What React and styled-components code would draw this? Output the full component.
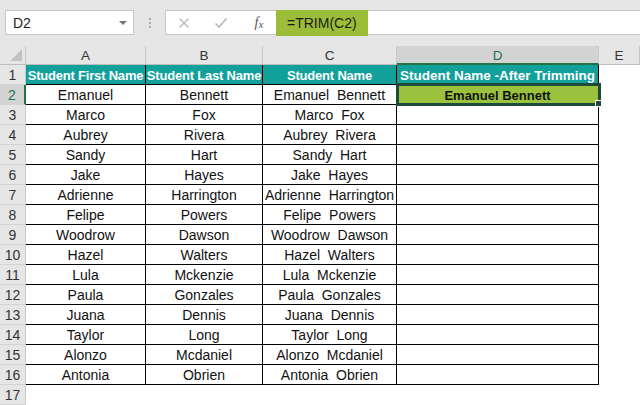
import React from "react";
import styled, { createGlobalStyle, css } from "styled-components";

const GlobalStyle = createGlobalStyle`
  html, body { margin: 0; padding: 0; background: #ffffff; }
  body { font-family: "Liberation Sans", Arial, sans-serif; }
  * { box-sizing: border-box; }
`;

const Page = styled.div`
  width: 640px;
  height: 405px;
  overflow: hidden;
  background: #ffffff;
`;

const Toolbar = styled.div`
  height: 46px;
  background: #e6e6e6;
  display: flex;
  align-items: flex-start;
  padding-top: 10px;
  padding-left: 5px;
`;

const NameBox = styled.div`
  width: 129px;
  height: 25px;
  background: #ffffff;
  border: 1px solid #c6c6c6;
  display: flex;
  align-items: center;
  justify-content: space-between;
  padding: 0 6px 0 7px;
  font-size: 14px;
  color: #222;
`;

const Caret = styled.span`
  width: 0;
  height: 0;
  border-left: 4px solid transparent;
  border-right: 4px solid transparent;
  border-top: 4px solid #777;
  margin-top: 1px;
`;

const Dots = styled.div`
  width: 31px;
  height: 25px;
  display: flex;
  flex-direction: column;
  align-items: center;
  justify-content: center;
  gap: 2px;
  span {
    width: 2px;
    height: 2px;
    background: #aaa;
  }
`;

const FormulaBox = styled.div`
  flex: 1;
  height: 25px;
  background: #ffffff;
  border: 1px solid #c6c6c6;
  border-right: none;
  display: flex;
  align-items: stretch;
`;

const IconSlot = styled.div`
  width: ${(p) => p.$w || 37}px;
  display: flex;
  align-items: center;
  justify-content: center;
`;

const Fx = styled.div`
  width: 34px;
  display: flex;
  align-items: center;
  justify-content: center;
  font-family: "Liberation Serif", "Times New Roman", serif;
  font-style: italic;
  font-size: 14px;
  color: #555;
  padding-left: 6px;
  span { font-size: 11px; margin-top: 2px; }
`;

const FormulaText = styled.div`
  margin-left: 3px;
  margin-top: -1px;
  margin-bottom: -2px;
  width: 92px;
  background: #9bbd38;
  display: flex;
  align-items: center;
  padding-left: 11px;
  font-size: 14px;
  color: #1a1a1a;
`;

const Sheet = styled.div`
  display: grid;
  grid-template-columns: 26px 120px 117px 134px 202px 1fr;
  grid-template-rows: 19px;
  grid-auto-rows: 20px;
`;

const Corner = styled.div`
  background: #e6e6e6;
  border-right: 1px solid #c8c8c8;
  border-bottom: 1px solid #bdbdbd;
  position: relative;
  &::after {
    content: "";
    position: absolute;
    right: 3px;
    bottom: 3px;
    width: 0;
    height: 0;
    border-left: 12px solid transparent;
    border-bottom: 12px solid #c2c2c2;
  }
`;

const ColHeader = styled.div`
  background: #e6e6e6;
  border-right: 1px solid #c8c8c8;
  border-bottom: 1px solid #bdbdbd;
  display: flex;
  align-items: center;
  justify-content: center;
  font-size: 13.5px;
  color: #333;
  padding-top: 1px;
  ${(p) =>
    p.$active &&
    css`
      background: #d3d3d3;
      border-bottom: 2px solid #217346;
      color: #217346;
    `}
`;

const RowHeader = styled.div`
  background: #e6e6e6;
  border-right: 1px solid #c8c8c8;
  border-bottom: 1px solid #d4d4d4;
  display: flex;
  align-items: center;
  justify-content: center;
  font-size: 14px;
  color: #333;
  ${(p) =>
    p.$active &&
    css`
      background: #d3d3d3;
      border-right: 2px solid #217346;
      color: #217346;
    `}
`;

const Cell = styled.div`
  border-right: 1px solid #000;
  border-bottom: 1px solid #000;
  display: flex;
  align-items: center;
  justify-content: center;
  font-size: 14px;
  color: #111;
  white-space: nowrap;
  overflow: visible;
  padding-top: 1px;
  ${(p) =>
    p.$head &&
    css`
      background: #12a09b;
      color: #ffffff;
      font-weight: bold;
      font-size: 13px;
      letter-spacing: -0.2px;
    `}
  ${(p) =>
    p.$wide &&
    css`
      font-size: 13.5px;
      letter-spacing: 0;
    `}
  ${(p) =>
    p.$selected &&
    css`
      position: relative;
      background: #9bc23c;
      font-weight: bold;
      font-size: 13px;
      &::after {
        content: "";
        position: absolute;
        left: -1px;
        top: -2px;
        right: -3px;
        bottom: -2px;
        border: 3px solid #1c4a3b;
      }
      &::before {
        content: "";
        position: absolute;
        right: -4px;
        bottom: -3px;
        width: 5px;
        height: 5px;
        background: #1c4a3b;
        border: 1px solid #fff;
        z-index: 2;
      }
    `}
`;

const Blank = styled.div`
  background: #ffffff;
`;

const headers = ["Student First Name", "Student Last Name", "Student Name"];

const people = [
  ["Emanuel", "Bennett"],
  ["Marco", "Fox"],
  ["Aubrey", "Rivera"],
  ["Sandy", "Hart"],
  ["Jake", "Hayes"],
  ["Adrienne", "Harrington"],
  ["Felipe", "Powers"],
  ["Woodrow", "Dawson"],
  ["Hazel", "Walters"],
  ["Lula", "Mckenzie"],
  ["Paula", "Gonzales"],
  ["Juana", "Dennis"],
  ["Taylor", "Long"],
  ["Alonzo", "Mcdaniel"],
  ["Antonia", "Obrien"],
];

const XIcon = () => (
  <svg width="12" height="12" viewBox="0 0 12 12">
    <path d="M1.5 1.5 L10.5 10.5 M10.5 1.5 L1.5 10.5" stroke="#b8b8b8" strokeWidth="1.4" fill="none" />
  </svg>
);

const CheckIcon = () => (
  <svg width="14" height="12" viewBox="0 0 14 12">
    <path d="M1.5 6.5 L5 10 L12.5 1.5" stroke="#b8b8b8" strokeWidth="1.6" fill="none" />
  </svg>
);

export default function App() {
  return (
    <Page>
      <GlobalStyle />
      <Toolbar>
        <NameBox>
          D2
          <Caret />
        </NameBox>
        <Dots>
          <span />
          <span />
          <span />
        </Dots>
        <FormulaBox>
          <IconSlot $w={36}>
            <XIcon />
          </IconSlot>
          <IconSlot>
            <CheckIcon />
          </IconSlot>
          <Fx>
            f<span>x</span>
          </Fx>
          <FormulaText>=TRIM(C2)</FormulaText>
        </FormulaBox>
      </Toolbar>
      <Sheet>
        <Corner />
        <ColHeader>A</ColHeader>
        <ColHeader>B</ColHeader>
        <ColHeader>C</ColHeader>
        <ColHeader $active>D</ColHeader>
        <ColHeader>E</ColHeader>

        <RowHeader>1</RowHeader>
        {headers.map((h) => (
          <Cell key={h} $head>
            {h}
          </Cell>
        ))}
        <Cell $head $wide>Student Name -After Trimming</Cell>
        <Blank />

        {people.map(([first, last], i) => (
          <React.Fragment key={first}>
            <RowHeader $active={i === 0}>{i + 2}</RowHeader>
            <Cell>{first}</Cell>
            <Cell>{last}</Cell>
            <Cell>{`${first}\u00a0 ${last}`}</Cell>
            {i === 0 ? <Cell $selected>Emanuel Bennett</Cell> : <Cell />}
            <Blank />
          </React.Fragment>
        ))}

        <RowHeader>17</RowHeader>
        <Blank />
        <Blank />
        <Blank />
        <Blank />
        <Blank />
      </Sheet>
    </Page>
  );
}
